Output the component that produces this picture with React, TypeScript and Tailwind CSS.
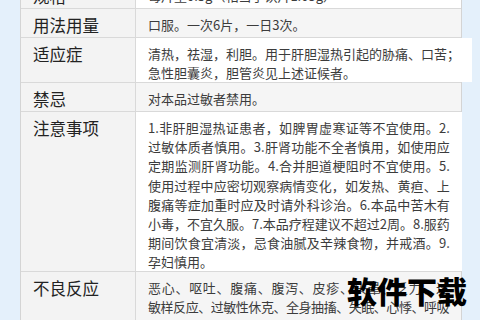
import React from "react";

type Row = { label: string; lines: string[]; h: string; bg: string; tight?: number };

const rows: Row[] = [
  { label: "规格", lines: ["每片重0.3g（相当于饮片1.05g）"], h: "h-[29px]", bg: "bg-white" },
  { label: "用法用量", lines: ["口服。一次6片，一日3次。"], h: "h-[29px]", bg: "bg-[#f5f5f5]" },
  {
    label: "适应症",
    lines: ["清热，祛湿，利胆。用于肝胆湿热引起的胁痛、口苦；", "急性胆囊炎，胆管炎见上述证候者。"],
    h: "h-[45px]",
    bg: "bg-white",
  },
  { label: "禁忌", lines: ["对本品过敏者禁用。"], h: "h-[29px]", bg: "bg-[#f5f5f5]" },
  {
    label: "注意事项",
    lines: [
      "1.非肝胆湿热证患者，如脾胃虚寒证等不宜使用。2.",
      "过敏体质者慎用。3.肝肾功能不全者慎用，如使用应",
      "定期监测肝肾功能。4.合并胆道梗阻时不宜使用。5.",
      "使用过程中应密切观察病情变化，如发热、黄疸、上",
      "腹痛等症加重时应及时请外科诊治。6.本品中苦木有",
      "小毒，不宜久服。7.本品疗程建议不超过2周。8.服药",
      "期间饮食宜清淡，忌食油腻及辛辣食物，并戒酒。9.",
      "孕妇慎用。",
    ],
    h: "h-[160px]",
    bg: "bg-white",
  },
  {
    label: "不良反应",
    lines: [
      "恶心、呕吐、腹痛、腹泻、皮疹、头晕、乏力、过",
      "敏样反应、过敏性休克、全身抽搐、失眠、心悸、呼吸",
      "困难等。",
    ],
    h: "h-[80px]",
    bg: "bg-[#f5f5f5]",
    tight: 1,
  },
];

export default function App() {
  return (
    <div className="relative w-[480px] h-[320px] overflow-hidden bg-[#e4f0fb] flex items-start [font-family:'Noto_Sans_CJK_SC',sans-serif]">
      <div className="ml-[20px] mt-[-20px] w-[442px] border-x border-[#d4d4d4] flex flex-col">
        {rows.map((r, i) => (
          <div key={i} className={`flex border-b border-[#d9d9d9] ${r.h}`}>
            <div className="w-[115px] shrink-0 bg-[#f3f3f3] border-r border-[#d9d9d9] pl-3 pt-[7px] text-[16.5px] leading-[19px] text-[#222]">
              {r.label}
            </div>
            <div className={`flex-1 ${r.bg} pl-3 pr-3 pt-[6px] text-[13px] leading-[19.2px] text-[#3c3c3c]`}>
              {r.lines.map((l, j) => {
                const justify = j < r.lines.length - 1;
                const tight = r.tight === j;
                return (
                  <div
                    key={j}
                    className={`whitespace-nowrap ${
                      justify ? "text-justify [text-align-last:justify]" : ""
                    } ${tight ? "tracking-[-0.55px]" : ""}`}
                  >
                    {l}
                  </div>
                );
              })}
            </div>
          </div>
        ))}
      </div>
      <div className="absolute left-[347px] top-[275px] text-[30px] leading-[30px] font-black text-black">
        软件下载
      </div>
    </div>
  );
}
